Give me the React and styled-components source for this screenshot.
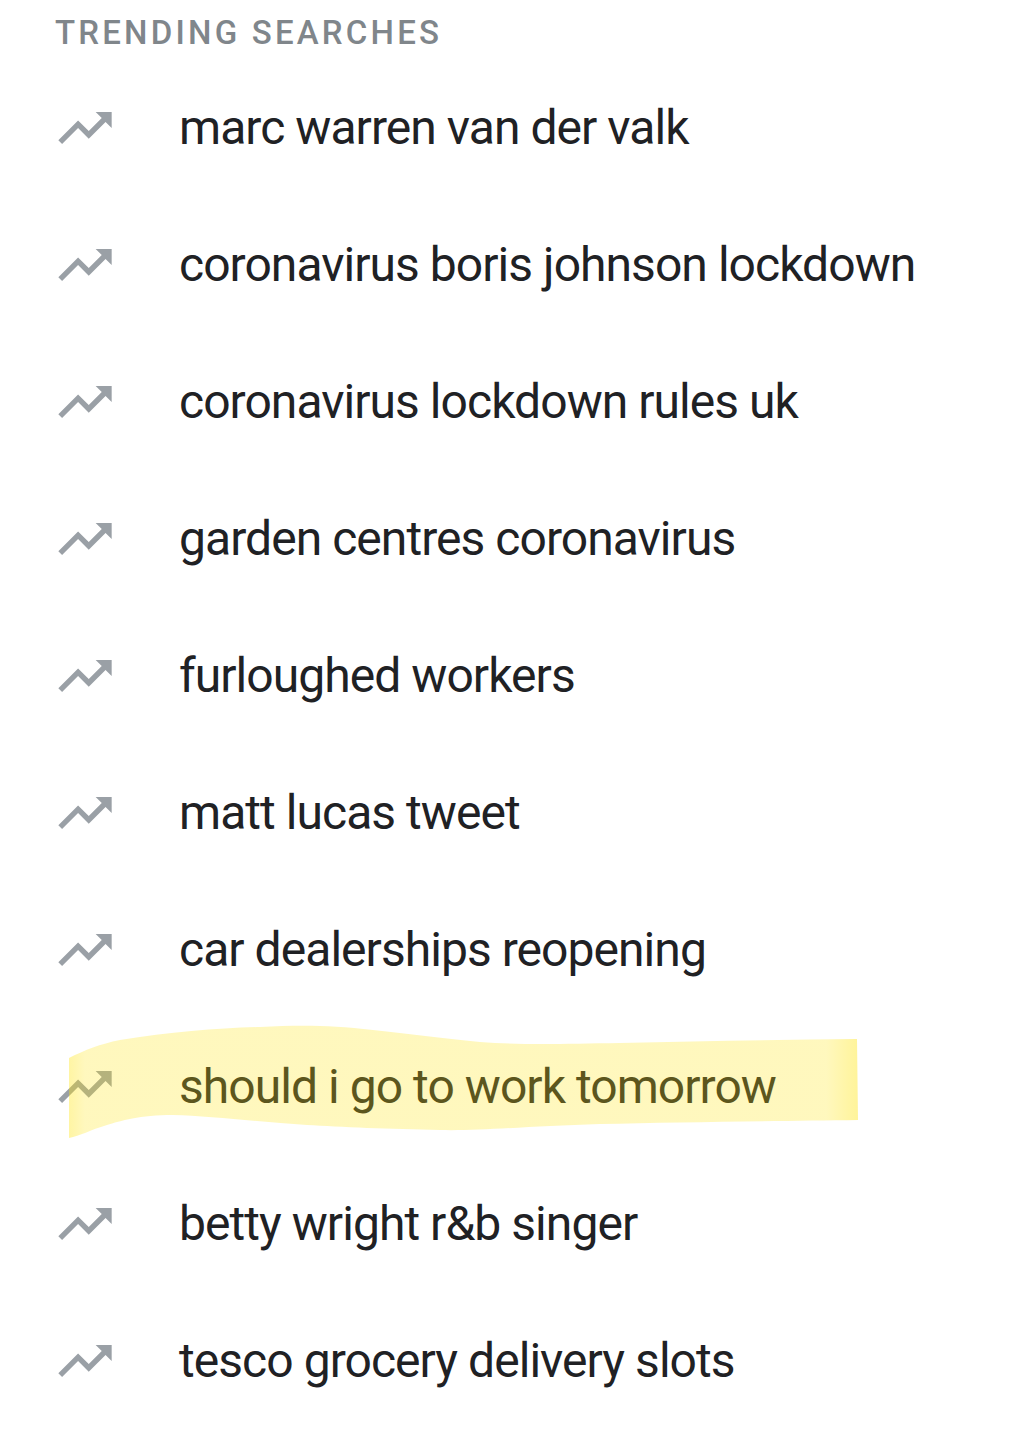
import React from 'react';
import styled, { createGlobalStyle } from 'styled-components';

const GlobalStyle = createGlobalStyle`
    html, body {
        margin: 0;
        padding: 0;
        background: #ffffff;
    }
    body {
        font-family: Roboto, "Noto Sans", Arial, sans-serif;
    }
`;

const Page = styled.div`
    width: 1009px;
    min-height: 1434px;
    padding-top: 13px;
    box-sizing: border-box;
    background: #ffffff;
`;

const Heading = styled.h2`
    margin: 0 0 6px 55px;
    font-size: 33px;
    line-height: 40px;
    font-weight: 500;
    letter-spacing: 3.2px;
    color: #80868b;
    text-transform: uppercase;
`;

const List = styled.ul`
    list-style: none;
    margin: 0;
    padding: 0;
`;

const Row = styled.li`
    position: relative;
    display: flex;
    align-items: center;
    height: 137px;
    padding-left: 53px;
`;

const IconBox = styled.span`
    display: flex;
    width: 64px;
    height: 64px;
    margin-right: 62px;
    color: #9aa0a6;
`;

const Label = styled.span`
    font-size: 48px;
    line-height: 137px;
    letter-spacing: -0.95px;
    color: #202124;
    white-space: nowrap;
`;

const Marker = styled.svg`
    position: absolute;
    left: 0;
    top: 0;
    width: 1009px;
    height: 137px;
    pointer-events: none;
`;

const TrendIcon = () => (
    <svg viewBox="0 0 24 24" width="64" height="64" fill="currentColor">
        <path d="M16 6l2.29 2.29-4.88 4.88-4-4L2 16.59 3.41 18l6-6 4 4 6.3-6.29L22 12V6z" />
    </svg>
);

const Highlight = () => (
    <Marker viewBox="0 0 1009 137">
        <defs>
            <linearGradient id="hl" x1="0" x2="1" y1="0" y2="0">
                <stop offset="0" stopColor="rgb(255,228,13)" stopOpacity="0.38" />
                <stop offset="0.02" stopColor="rgb(255,228,13)" stopOpacity="0.27" />
                <stop offset="0.96" stopColor="rgb(255,228,13)" stopOpacity="0.27" />
                <stop offset="1" stopColor="rgb(255,228,13)" stopOpacity="0.42" />
            </linearGradient>
        </defs>
        <path
            fill="url(#hl)"
            d="M69 40 C 85 32, 100 26, 120 22 C 170 14, 220 10, 260 9 C 300 7, 330 7, 373 12 C 410 16, 440 20, 480 24 C 520 27, 560 26, 620 25 C 700 23, 780 22, 857 21 L 858 102 C 780 103, 680 104, 600 106 C 530 108, 480 113, 440 112 C 390 111, 340 109, 307 107 C 260 104, 210 98, 173 97 C 140 97, 120 103, 107 107 C 90 112, 80 118, 69 120 Z"
        />
    </Marker>
);

const searches = [
    'marc warren van der valk',
    'coronavirus boris johnson lockdown',
    'coronavirus lockdown rules uk',
    'garden centres coronavirus',
    'furloughed workers',
    'matt lucas tweet',
    'car dealerships reopening',
    'should i go to work tomorrow',
    'betty wright r&b singer',
    'tesco grocery delivery slots',
];

const App = () => (
    <Page>
        <GlobalStyle />
        <Heading>Trending searches</Heading>
        <List>
            {searches.map((s, i) => (
                <Row key={s}>
                    <IconBox>
                        <TrendIcon />
                    </IconBox>
                    <Label>{s}</Label>
                    {i === 7 && <Highlight />}
                </Row>
            ))}
        </List>
    </Page>
);

export default App;
